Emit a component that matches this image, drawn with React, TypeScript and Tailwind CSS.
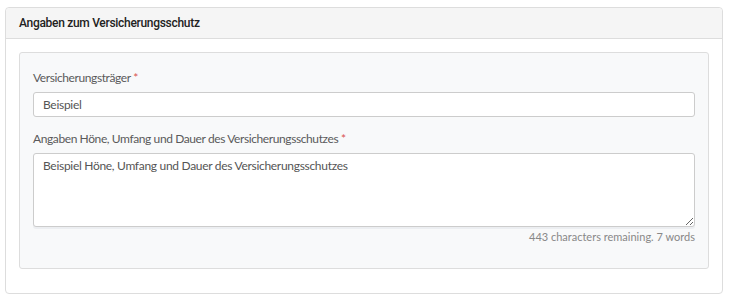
import React from "react";

export default function App() {
  return (
    <div className="pt-[7px] pl-[5px] pr-[6px] bg-white h-[300px] font-['Lato','Open_Sans',sans-serif] tracking-[-0.3px]">
      <div className="border border-[#dddddd] rounded-[4px] bg-white">
        <div className="h-[31px] bg-[#f5f5f5] border-b border-[#dddddd] rounded-t-[4px] px-[13px] flex items-center">
          <span className="text-[12px] font-medium text-[#222222] font-['Roboto','Open_Sans',sans-serif] tracking-[-0.3px]">
            Angaben zum Versicherungsschutz
          </span>
        </div>
        <div className="pt-[13px] px-[13px] pb-[24px]">
          <div className="bg-[#f8f9fa] border border-[#dddddd] rounded-[3px] pt-[17px] px-[13px] pb-[23px] flex flex-col">
            <label className="text-[12px] leading-[16px] text-[#5a5a5a] mb-[6px] tracking-[-0.4px]">
              Versicherungsträger <span className="text-[#d9534f]">*</span>
            </label>
            <input
              readOnly
              value="Beispiel"
              className="block w-full h-[25px] border border-[#cccccc] rounded-[3px] bg-white px-[9px] text-[12px] text-[#555555] outline-none font-['Lato','Open_Sans',sans-serif] tracking-[-0.3px]"
            />
            <label className="text-[12px] leading-[16px] text-[#5a5a5a] mt-[14px] mb-[6px] tracking-[-0.4px]">
              Angaben Höne, Umfang und Dauer des Versicherungsschutzes <span className="text-[#d9534f]">*</span>
            </label>
            <textarea
              readOnly
              value="Beispiel Höne, Umfang und Dauer des Versicherungsschutzes"
              className="block w-full h-[74px] border border-[#cccccc] rounded-[3px] bg-white px-[9px] pt-[4px] text-[12px] leading-[16px] text-[#555555] outline-none shadow-[0_2px_0_#eceef1] font-['Lato','Open_Sans',sans-serif] tracking-[-0.3px]"
            />
            <div className="text-right text-[11px] leading-[16px] text-[#888888] mt-[2px] tracking-normal">
              443 characters remaining. 7 words
            </div>
          </div>
        </div>
      </div>
    </div>
  );
}
